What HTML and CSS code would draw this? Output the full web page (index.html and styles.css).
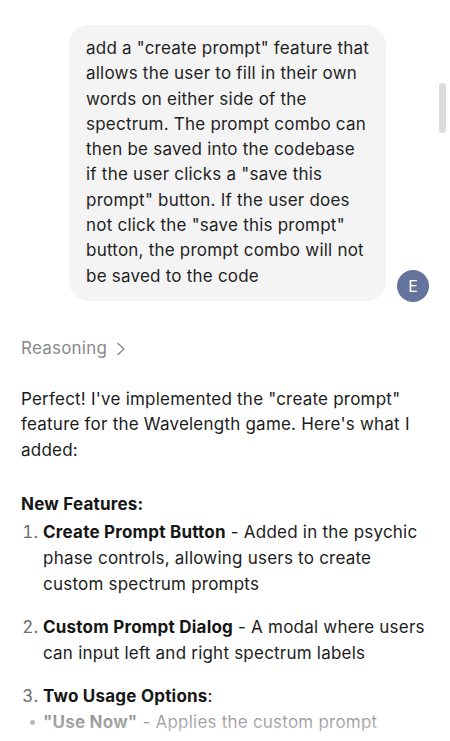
FILE: index.html
```html
<!DOCTYPE html>
<html>
<head>
<meta charset="utf-8">
<link rel="stylesheet" href="styles.css">
</head>
<body>
<div class="page">
  <div class="user-row">
    <div class="bubble">add a "create prompt" feature that allows the user to fill in their own words on either side of the spectrum. The prompt combo can then be saved into the codebase if the user clicks a "save this prompt" button. If the user does not click the "save this prompt" button, the prompt combo will not be saved to the code</div>
    <div class="avatar">E</div>
  </div>
  <div class="assistant">
    <div class="reasoning">Reasoning
      <svg class="chev" width="10" height="14" viewBox="0 0 10 14"><polyline points="2,1.5 8,7 2,12.5" fill="none" stroke="#8a8a8a" stroke-width="1.4" stroke-linecap="round" stroke-linejoin="round"/></svg>
    </div>
    <p class="para">Perfect! I've implemented the "create prompt" feature for the Wavelength game. Here's what I added:</p>
    <p class="heading"><strong>New Features:</strong></p>
    <ol class="list">
      <li><strong>Create Prompt Button</strong> - Added in the psychic phase controls, allowing users to create custom spectrum prompts</li>
      <li><strong>Custom Prompt Dialog</strong> - A modal where users can input left and right spectrum labels</li>
      <li class="tight"><strong>Two Usage Options</strong>:
        <ul class="sub">
          <li><strong>"Use Now"</strong> - Applies the custom prompt</li>
        </ul>
      </li>
    </ol>
  </div>
  <div class="fade"></div>
  <div class="scrollbar"></div>
</div>
</body>
</html>
```

FILE: styles.css
```css
html, body {
  margin: 0;
  padding: 0;
  background: #ffffff;
}
body {
  font-family: Inter, "Noto Sans", sans-serif;
  font-size: 17px;
  letter-spacing: 0.22px;
  color: #1c1c1c;
  width: 450px;
  height: 741px;
  overflow: hidden;
}
.page {
  position: relative;
  height: 741px;
  overflow: hidden;
  padding-top: 25px;
  box-sizing: border-box;
}
.user-row {
  display: flex;
  justify-content: flex-end;
  align-items: flex-end;
  gap: 11px;
  padding-right: 21px;
}
.bubble {
  width: 283px;
  background: #f4f4f4;
  border-radius: 20px;
  padding: 11px 17px 12px 17px;
  line-height: 25.3px;
  color: #1f1f1f;
}
.avatar {
  width: 32px;
  height: 32px;
  border-radius: 50%;
  background: #63739b;
  color: #ffffff;
  font-size: 16px;
  letter-spacing: 0;
  display: flex;
  align-items: center;
  justify-content: center;
  flex-shrink: 0;
  margin-bottom: -1px;
}
.assistant {
  padding: 0 21px;
  line-height: 25.7px;
}
.reasoning {
  margin-top: 35px;
  color: #8a8a8a;
  display: flex;
  align-items: center;
  gap: 9px;
}
.chev {
  margin-top: 1px;
}
.para {
  margin: 25px 0 0 0;
}
.heading {
  margin: 28px 0 0 0;
}
strong {
  font-weight: 700;
  color: #161616;
}
.list {
  margin: 1.5px 0 0 0;
  padding: 0 0 0 22px;
  line-height: 26px;
}
.list > li {
  margin-bottom: 17px;
  padding-left: 0;
}
.list > li::marker {
  color: #6b6b6b;
}
.list > li.tight {
  margin-bottom: 0;
}
.sub {
  margin: 0;
  padding: 0;
  list-style: none;
}
.sub li {
  position: relative;
}
.sub li::before {
  content: "";
  position: absolute;
  left: -13px;
  top: 11px;
  width: 5px;
  height: 5px;
  border-radius: 50%;
  background: #555;
}
.fade {
  position: absolute;
  left: 0;
  right: 0;
  bottom: 0;
  height: 36px;
  background: linear-gradient(to bottom, rgba(255,255,255,0.45), rgba(255,255,255,0.75));
}
.scrollbar {
  position: absolute;
  right: 4px;
  top: 83px;
  width: 7px;
  height: 50px;
  border-radius: 4px;
  background: #dcdcdc;
}
```
